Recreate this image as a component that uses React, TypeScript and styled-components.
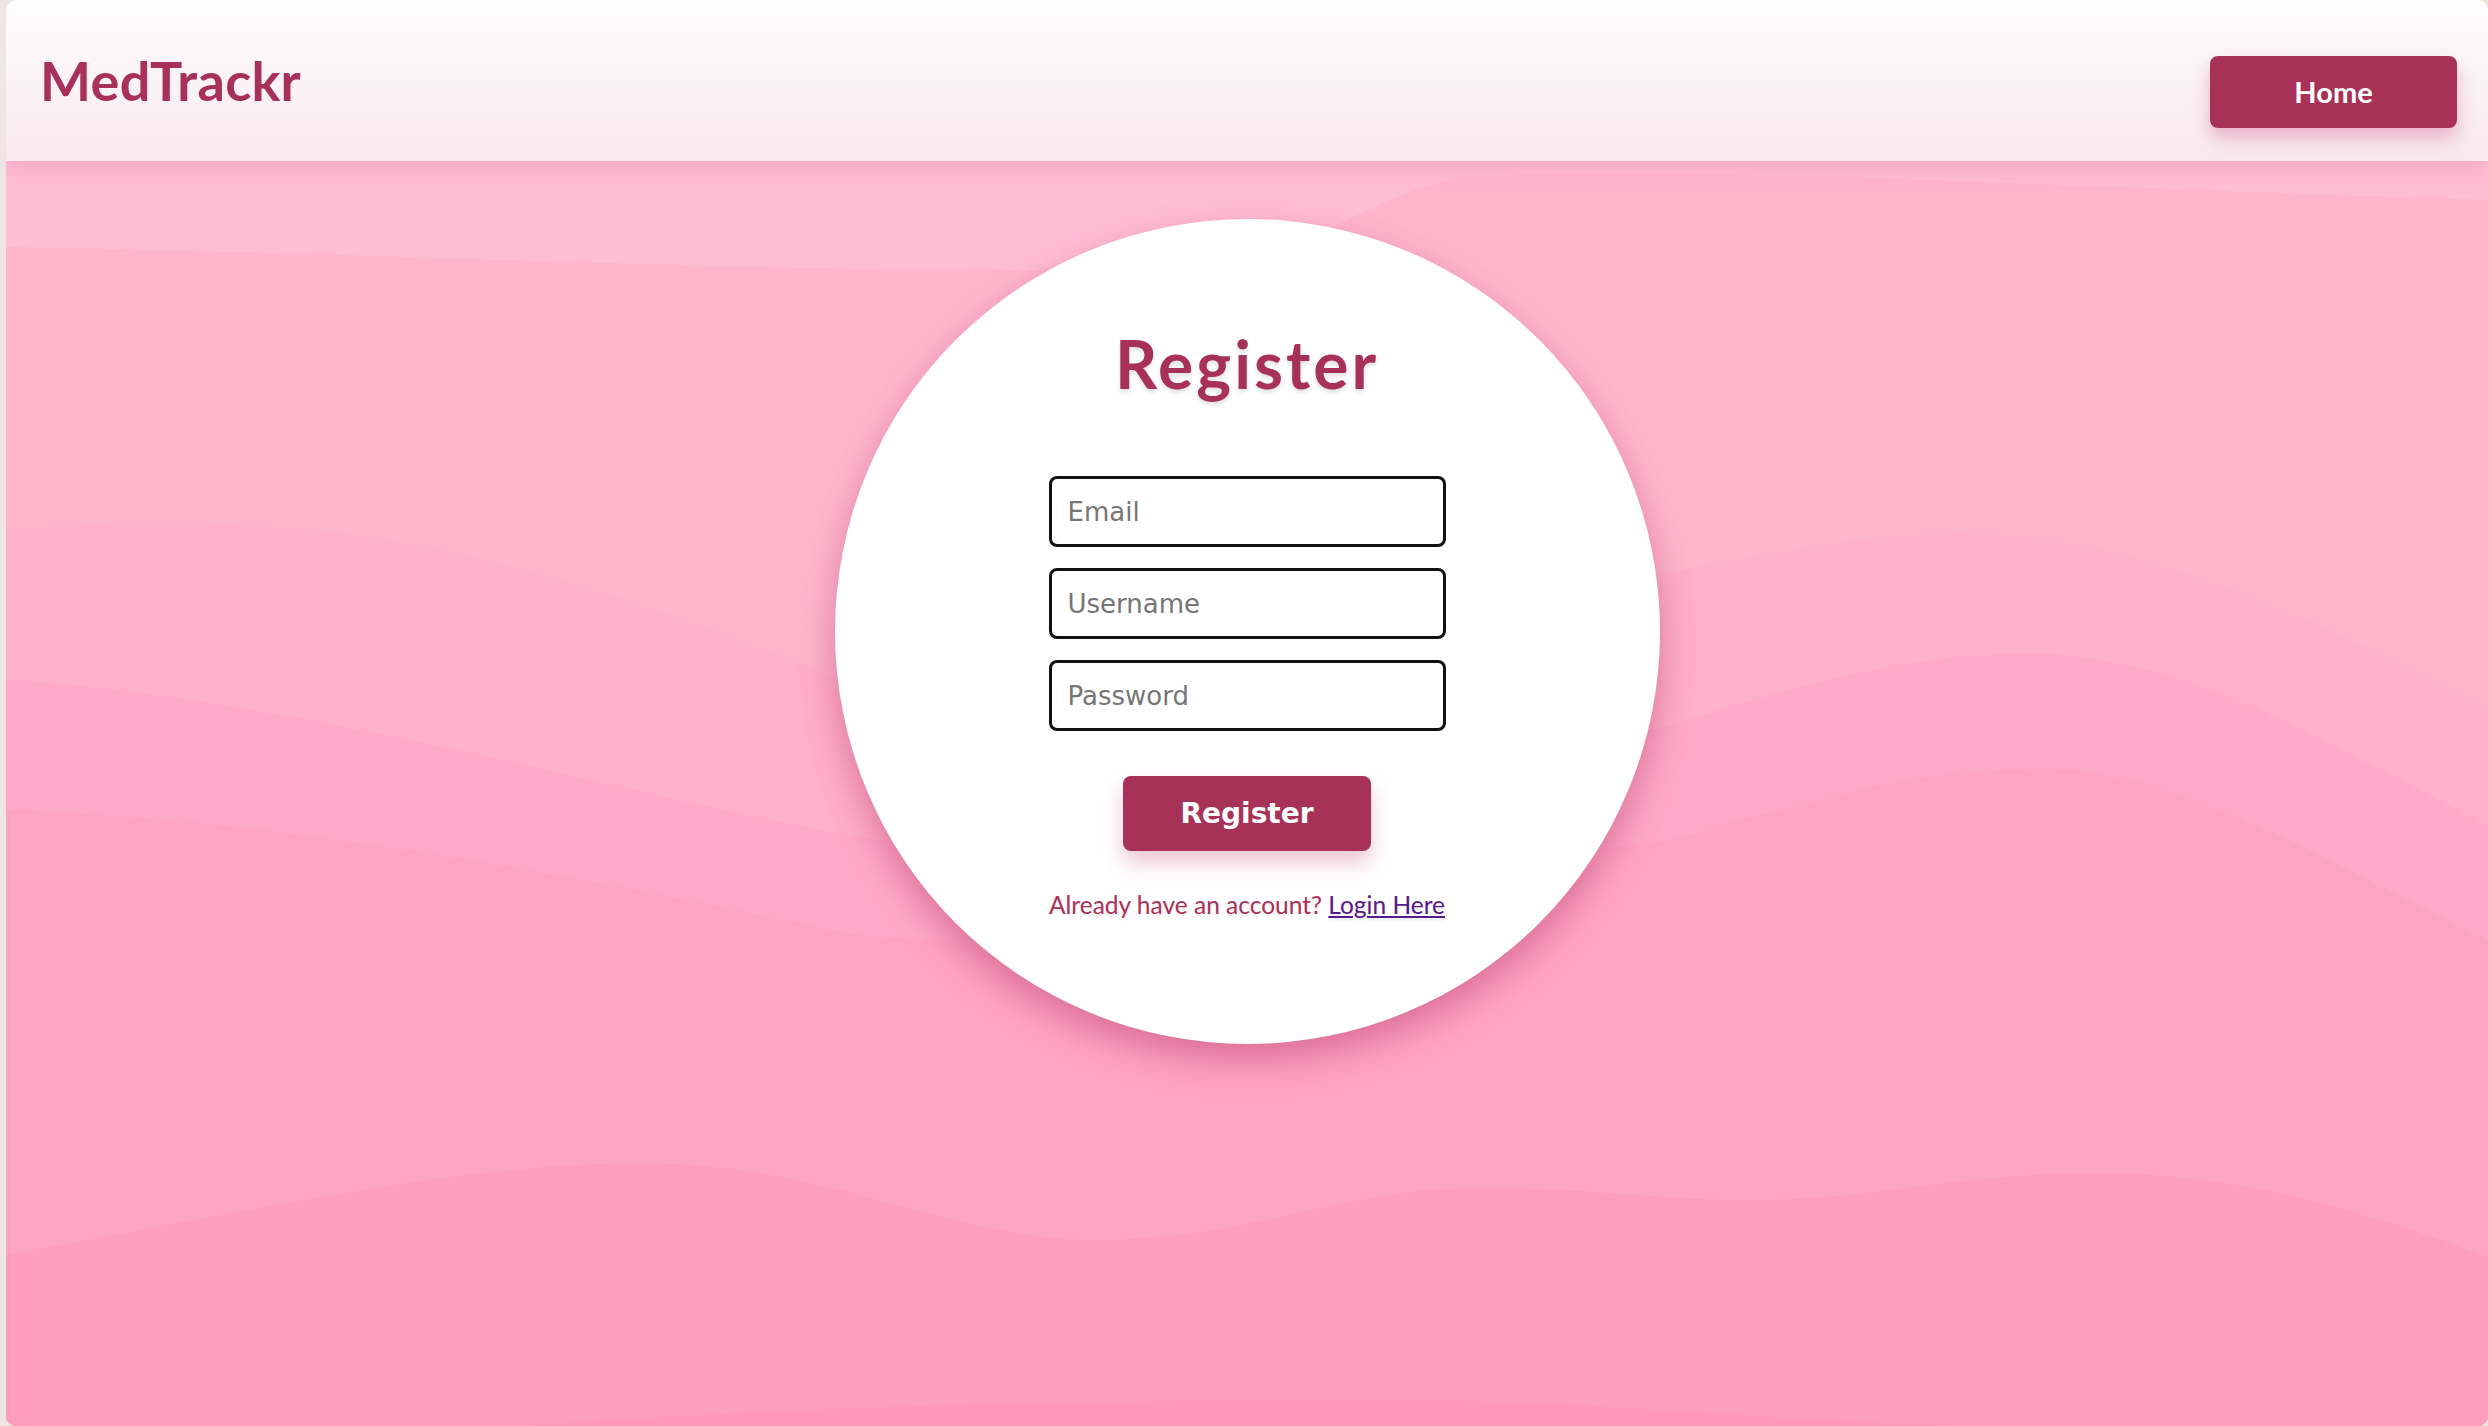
import * as React from "react";
import styled, { createGlobalStyle } from "styled-components";

const GlobalStyle = createGlobalStyle`
  html, body {
    margin: 0;
    padding: 0;
    background: #efe5e3;
  }
  * {
    box-sizing: border-box;
  }
`;

const Page = styled.div`
  margin-left: 6px;
  height: 100vh;
  border-radius: 10px;
  overflow: hidden;
  display: flex;
  flex-direction: column;
  background: #ffbdd3;
  position: relative;
`;

const Header = styled.header`
  position: relative;
  z-index: 2;
  height: 161px;
  flex: 0 0 auto;
  display: flex;
  justify-content: space-between;
  align-items: flex-start;
  padding: 0 31px 0 34px;
  background: linear-gradient(180deg, #fefdfd 0%, #f8e9ee 100%);
  box-shadow: 0 6px 22px rgba(222, 120, 160, 0.35);
`;

const Logo = styled.h1`
  margin: 54px 0 0;
  font-family: Lato, "Liberation Sans", sans-serif;
  font-weight: 700;
  font-size: 54px;
  line-height: 1;
  letter-spacing: 0.3px;
  color: #a83257;
`;

const NavButton = styled.button`
  margin-top: 56px;
  width: 247px;
  height: 72px;
  border: none;
  border-radius: 8px;
  background: #a83257;
  color: #fff;
  font-family: Lato, "Liberation Sans", sans-serif;
  font-weight: 700;
  font-size: 29px;
  padding-bottom: 3px;
  box-shadow: 0 10px 18px rgba(200, 70, 120, 0.35);
  cursor: pointer;
`;

const Main = styled.main`
  position: relative;
  flex: 1 1 auto;
  display: flex;
  justify-content: center;
  align-items: flex-start;
  padding-top: 58px;
`;

const Waves = styled.svg`
  position: absolute;
  inset: 0;
  width: 100%;
  height: 100%;
  z-index: 0;
`;

const Circle = styled.section`
  position: relative;
  z-index: 1;
  width: 825px;
  height: 825px;
  border-radius: 50%;
  background: #fff;
  box-shadow: 0 16px 36px rgba(176, 45, 95, 0.45);
  display: flex;
  flex-direction: column;
  align-items: center;
  padding-top: 112px;
`;

const Title = styled.h2`
  margin: 0;
  font-family: Lato, "Liberation Sans", sans-serif;
  font-weight: 700;
  font-size: 66px;
  line-height: 1;
  letter-spacing: 3px;
  color: #a83257;
  text-shadow: 0 3px 4px rgba(0, 0, 0, 0.12);
`;

const Form = styled.form`
  margin-top: 79px;
  display: flex;
  flex-direction: column;
  align-items: center;
  gap: 21px;
`;

const Field = styled.input`
  width: 397px;
  height: 71px;
  border: 3px solid #111;
  border-radius: 8px;
  padding: 0 15px 0 16px;
  font-family: "DejaVu Sans", sans-serif;
  font-size: 26px;
  color: #222;
  background: #fff;
  outline: none;
  &::placeholder {
    color: #767676;
  }
`;

const SubmitButton = styled.button`
  margin-top: 24px;
  width: 248px;
  height: 75px;
  border: none;
  border-radius: 8px;
  background: #a83257;
  color: #fff;
  font-family: "DejaVu Sans", sans-serif;
  font-weight: 700;
  font-size: 28px;
  box-shadow: 0 12px 20px rgba(200, 70, 120, 0.3);
  cursor: pointer;
`;

const Note = styled.p`
  margin: 42px 0 0;
  font-family: Lato, "Liberation Sans", sans-serif;
  font-size: 24.5px;
  line-height: 1;
  color: #a83257;
  text-shadow: 0 2px 3px rgba(0, 0, 0, 0.1);
`;

const NoteLink = styled.a`
  color: #551a8b;
  text-decoration: underline;
`;

const layers = [
  {
    fill: "#ffb6cd",
    d: "M0,86 C400,92 820,116 1180,108 C1300,104 1360,30 1460,16 C1700,4 2100,28 2482,39 V1266 H0 Z",
  },
  {
    fill: "#ffb0cb",
    d: "M0,368 C250,350 450,362 834,519 C1080,610 1400,440 1654,413 C1800,388 1890,370 1971,372 C2150,378 2350,480 2482,547 V1266 H0 Z",
  },
  {
    fill: "#ffaac8",
    d: "M0,519 C300,540 600,630 834,673 C1100,722 1400,585 1654,568 C1800,522 1900,493 2034,493 C2200,500 2350,600 2482,665 V1266 H0 Z",
  },
  {
    fill: "#ffa5c4",
    d: "M0,649 C300,660 600,722 834,771 C1100,812 1400,702 1654,682 C1800,642 1900,608 2044,608 C2200,615 2350,720 2482,779 V1266 H0 Z",
  },
  {
    fill: "#fe9ebe",
    d: "M0,1095 C250,1050 450,1003 637,1003 C820,1003 950,1080 1086,1080 C1250,1080 1330,1028 1470,1028 C1600,1028 1650,1040 1740,1040 C1870,1040 1950,1013 2089,1013 C2250,1013 2380,1060 2482,1097 V1266 H0 Z",
  },
  {
    fill: "#ff98bb",
    d: "M520,1266 C800,1244 1200,1238 1430,1240 C1620,1244 1800,1262 1950,1266 Z",
  },
];

export default function App() {
  return (
    <>
      <GlobalStyle />
      <Page>
        <Header>
          <Logo>MedTrackr</Logo>
          <NavButton type="button">Home</NavButton>
        </Header>
        <Main>
          <Waves viewBox="0 0 2482 1266" preserveAspectRatio="none">
            <defs>
              <linearGradient id="topBand" x1="0" y1="0" x2="0" y2="1">
                <stop offset="0" stopColor="#ffbed4" />
                <stop offset="1" stopColor="#ffbad1" />
              </linearGradient>
            </defs>
            <rect width="2482" height="1266" fill="url(#topBand)" />
            {layers.map((l, i) => (
              <path key={i} d={l.d} fill={l.fill} />
            ))}
          </Waves>
          <Circle>
            <Title>Register</Title>
            <Form onSubmit={(e) => e.preventDefault()}>
              <Field type="email" placeholder="Email" />
              <Field type="text" placeholder="Username" />
              <Field type="password" placeholder="Password" />
              <SubmitButton type="submit">Register</SubmitButton>
            </Form>
            <Note>
              Already have an account? <NoteLink href="#">Login Here</NoteLink>
            </Note>
          </Circle>
        </Main>
      </Page>
    </>
  );
}
